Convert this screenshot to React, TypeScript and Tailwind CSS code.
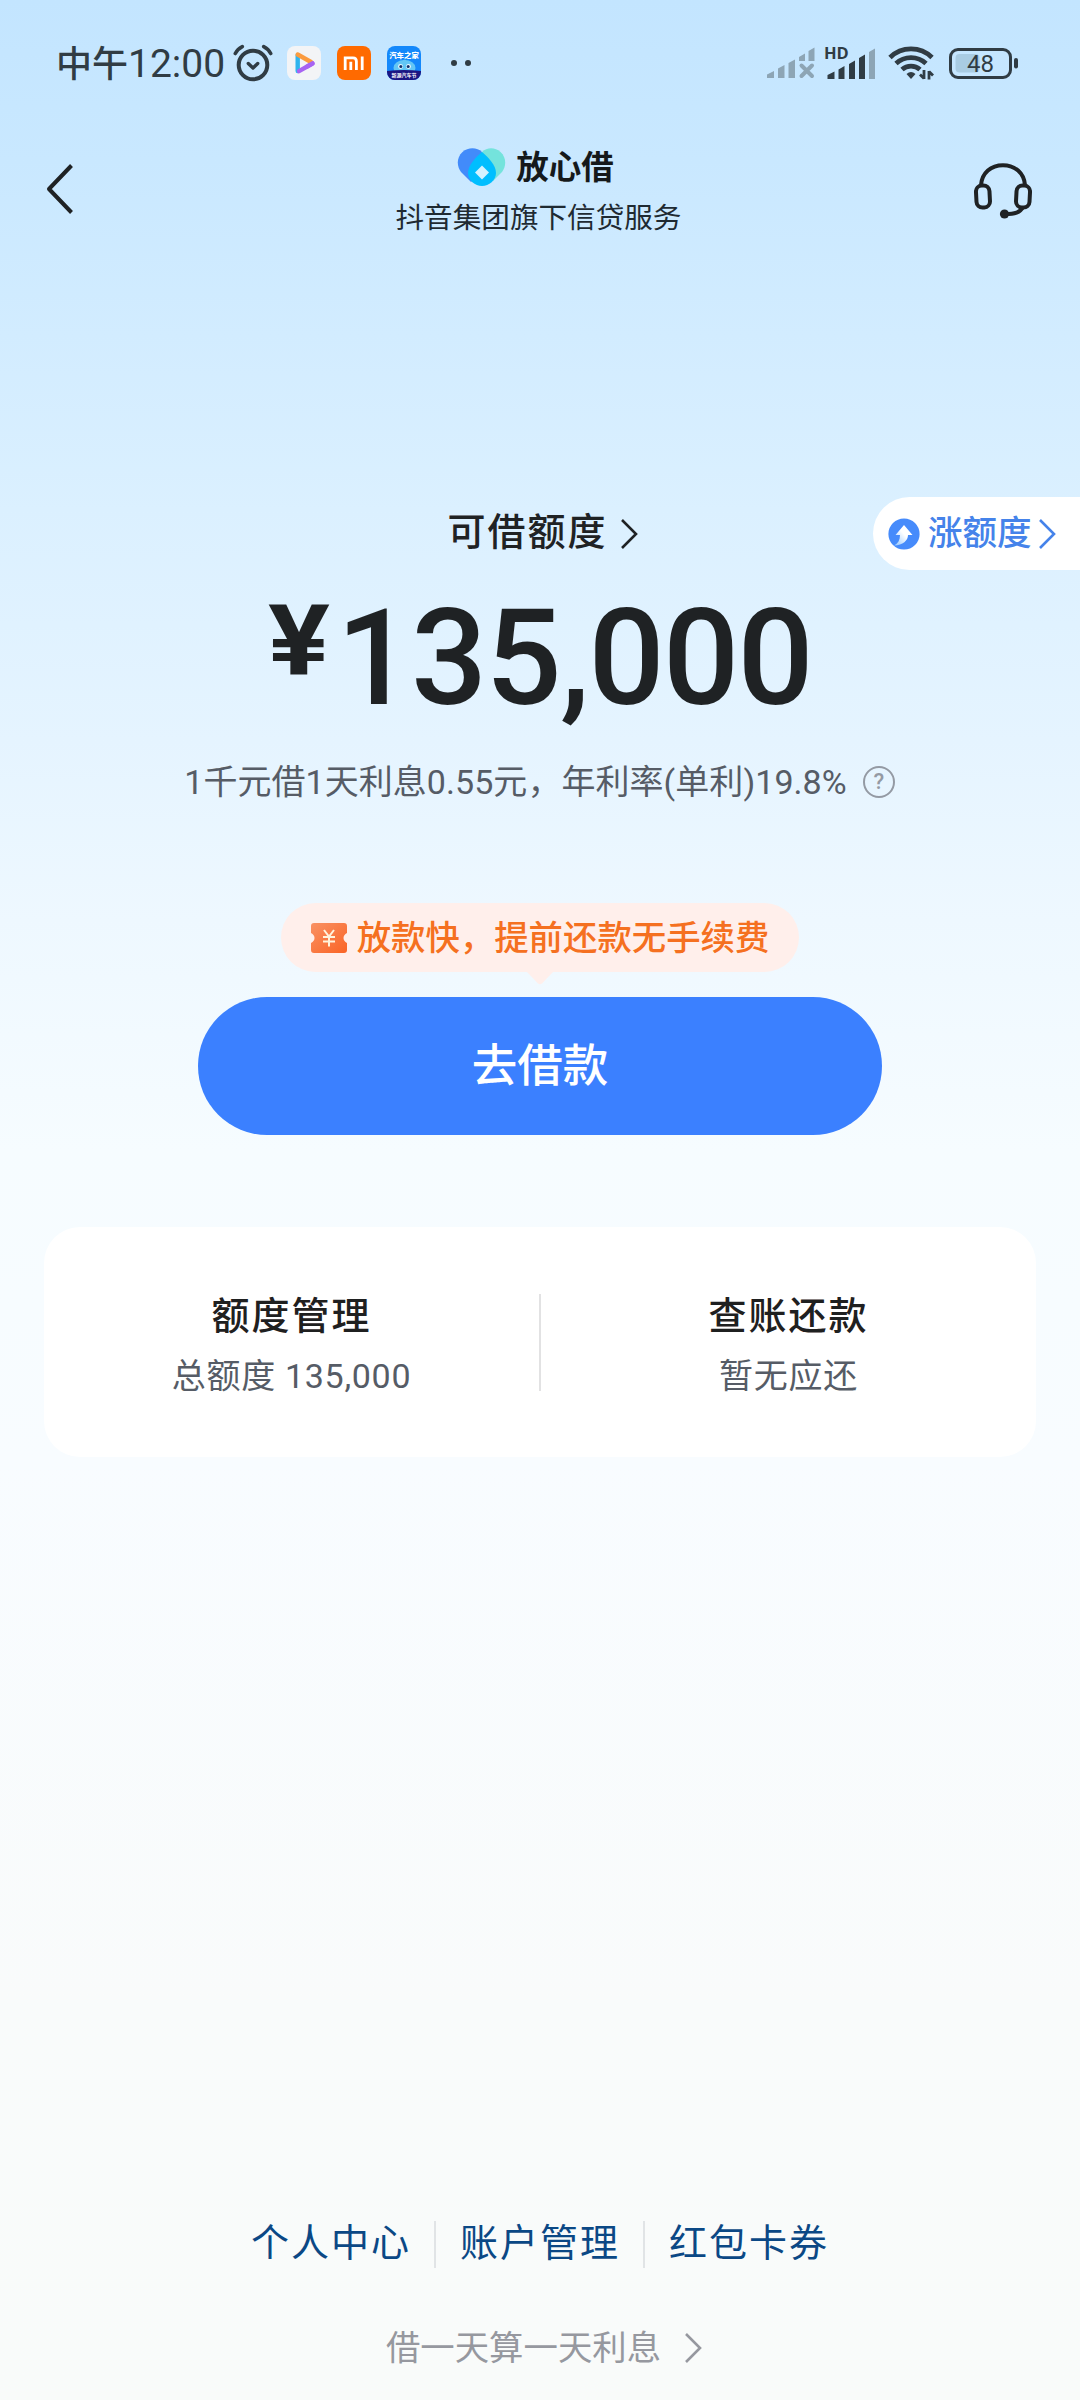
import React from 'react';

const links = ['个人中心', '账户管理', '红包卡券'];

function Chevron({ className, width = 2.6 }: { className?: string; width?: number }) {
  return (
    <svg className={className} width="18" height="32" viewBox="0 0 18 32" fill="none" stroke="currentColor" strokeWidth={width}>
      <path d="M2 2 L16 16 L2 30" />
    </svg>
  );
}

function AlarmIcon() {
  return (
    <svg width="40" height="38" viewBox="0 0 40 38" fill="none" stroke="#303c44" strokeWidth="4" strokeLinecap="round" strokeLinejoin="round">
      <circle cx="20" cy="21" r="14.3" />
      <path d="M15.3 19.5 L20 24 L24.7 19.5" strokeWidth="3.4" />
      <path d="M2.3 9.5 Q4.5 5 9.3 2.6 M37.7 9.5 Q35.5 5 30.7 2.6" strokeWidth="3.6" />
    </svg>
  );
}

function VideoAppIcon() {
  return (
    <svg width="34" height="34" viewBox="0 0 34 34">
      <rect width="34" height="34" rx="8" fill="#f3f4f6" />
      <g fill="none" strokeWidth="4.4" strokeLinecap="round">
        <path d="M10.7 9 V25" stroke="#2fb4ee" />
        <path d="M12 25.2 L25.5 17.5" stroke="#a763f2" />
        <path d="M10.7 8.5 L24 16" stroke="#fb9b3f" />
        <path d="M20 20.6 L25.5 17.3" stroke="#a763f2" />
      </g>
    </svg>
  );
}

function MiAppIcon() {
  return (
    <svg width="34" height="34" viewBox="0 0 34 34">
      <rect width="34" height="34" rx="8" fill="#ff6a00" />
      <g fill="none" stroke="#fff" strokeWidth="2.8">
        <path d="M8.2 24 V11.8 H16 Q19.4 11.8 19.4 15.4 V24" />
        <path d="M13.8 15.8 V24 M25.2 10.4 V24" />
      </g>
    </svg>
  );
}

function CarAppIcon() {
  return (
    <svg width="34" height="34" viewBox="0 0 34 34">
      <defs>
        <clipPath id="carClip">
          <rect width="34" height="34" rx="8" />
        </clipPath>
      </defs>
      <g clipPath="url(#carClip)">
        <rect width="34" height="34" fill="#1488fb" />
        <ellipse cx="17.5" cy="22" rx="11" ry="8" fill="#62c6f5" />
        <circle cx="17.5" cy="15.5" r="2" fill="#62c6f5" />
        <circle cx="13.5" cy="20.5" r="2.4" fill="#e8f8ff" />
        <circle cx="21.5" cy="20.5" r="2.4" fill="#e8f8ff" />
        <circle cx="13.8" cy="20.5" r="1.5" fill="#12306b" />
        <circle cx="21.2" cy="20.5" r="1.5" fill="#12306b" />
        <path d="M0 25 Q17 23 34 25 V34 H0 Z" fill="#1b1683" />
        <text x="17" y="12" textAnchor="middle" fontSize="7.4" fontWeight="900" fill="#fff">汽车之家</text>
        <text x="17" y="31" textAnchor="middle" fontSize="5" fontWeight="700" fill="#fff">新源汽车节</text>
      </g>
    </svg>
  );
}

function SignalOff() {
  return (
    <svg width="48" height="32" viewBox="0 0 48 32" fill="#8da5b5">
      <path d="M0 31 V27.5 L7 24 V31 Z M11 31 V21.5 L17.5 18 V31 Z M21.5 31 V16 L28 12.5 V31 Z M32 14 V10 L38 6.5 V14 Z M41.5 14 V4 L47.5 0.5 V14 Z" />
      <path d="M34.5 18.5 L45 29 M45 18.5 L34.5 29" stroke="#8da5b5" strokeWidth="4" strokeLinecap="round" />
    </svg>
  );
}

function SignalOn() {
  return (
    <svg className="overflow-visible" width="50" height="34" viewBox="0 0 50 34" fill="#303c44">
      <text x="-1" y="13" fontFamily="Open Sans" fontSize="16.5" fontWeight="700">HD</text>
      <path d="M2.5 33 V29 L9.5 25.5 V33 Z M13.5 33 V23.5 L19.5 20 V33 Z M24 33 V18 L30 14.5 V33 Z M34 33 V12 L40 8.5 V33 Z" />
      <path d="M44 33 V6 L50 2.5 V33 Z" fill="#8da5b5" />
    </svg>
  );
}

function WifiIcon() {
  return (
    <svg width="47" height="36" viewBox="0 0 47 36" fill="none" stroke="#303c44" strokeWidth="4.8">
      <path d="M2 12.5 A30 30 0 0 1 44 12.5" />
      <path d="M8 18.5 A22 22 0 0 1 38 18.5" />
      <path d="M14 24.5 A13.5 13.5 0 0 1 32 24.5" />
      <path d="M18.5 29 Q23 25 27.5 29 L23 34 Z" fill="#303c44" stroke="none" />
      <path d="M36 25 V34 M32 29.5 L36 33.5 M41 34.5 V26 M41 26.5 L45 30.5" strokeWidth="2.8" />
    </svg>
  );
}

function Battery() {
  return (
    <svg width="70" height="31" viewBox="0 0 70 31">
      <rect x="1.5" y="1.5" width="60" height="28" rx="7.5" fill="none" stroke="#303c44" strokeWidth="3" />
      <rect x="6.5" y="6" width="24" height="18.5" rx="4" fill="#a9cce3" />
      <rect x="65" y="10" width="4" height="10.5" rx="2" fill="#303c44" />
      <text x="31.5" y="24" textAnchor="middle" fontSize="24" fill="#303c44">48</text>
    </svg>
  );
}

function HeartLogo() {
  return (
    <svg width="49" height="38" viewBox="0 0 49 38">
      <path d="M25 4 C20 -1 11 -1 5.5 4 C-0.5 9.5 -0.5 18 4 24 L14 34 L34 20 Z" fill="#428bfa" />
      <path d="M25 4 C30 -1 38 -1 43.5 4 C49.5 9.5 49.5 18 45 24 L36 33 L20 20 Z" fill="#74e3dc" />
      <path d="M25 4 C31 9 39 17 39 25 C39 32 32 38 25 38 C18 38 11 32 11 25 C11 17 19 9 25 4 Z" fill="#00beff" />
      <path d="M25 17.5 L32 24.5 L25 31.5 L18 24.5 Z" fill="#d3f2ff" />
    </svg>
  );
}

function HeadsetIcon() {
  return (
    <svg width="58" height="56" viewBox="0 0 58 56" fill="none" stroke="#1f2224" strokeWidth="4" strokeLinejoin="round">
      <path d="M7 22 C8 10 17 2.2 29 2.2 C41 2.2 50 10 51 22" />
      <rect x="2.2" y="22.5" width="13.5" height="22" rx="6" transform="rotate(-3 9.5 33)" />
      <rect x="42.3" y="22.5" width="13.5" height="22" rx="6" transform="rotate(3 48.5 33)" />
      <path d="M49 44 C46 49.5 41 51 31 51" />
      <circle cx="30.5" cy="51" r="4.6" fill="#1f2224" stroke="none" />
    </svg>
  );
}

function RaiseIcon() {
  return (
    <svg width="32" height="32" viewBox="0 0 32 32">
      <defs>
        <linearGradient id="raise" x1="1" y1="0" x2="0" y2="1">
          <stop offset="0.45" stopColor="#fff" />
          <stop offset="1" stopColor="#8fc4ff" />
        </linearGradient>
      </defs>
      <circle cx="16" cy="16" r="15.6" fill="#468bfb" />
      <path d="M16 7 L24.5 17 H20 C20 22.5 15 27 6 27.5 C10 25.5 12 22 12 17 H7.5 Z" fill="url(#raise)" />
    </svg>
  );
}

function CouponIcon() {
  return (
    <svg width="36" height="30" viewBox="0 0 36 30">
      <defs>
        <linearGradient id="coupon" x1="0" y1="0" x2="1" y2="1">
          <stop offset="0" stopColor="#f99163" />
          <stop offset="1" stopColor="#fa6425" />
        </linearGradient>
      </defs>
      <path d="M3 0 H33 Q36 0 36 3 V10 Q32.5 12 32.5 15 Q32.5 18 36 20 V27 Q36 30 33 30 H3 Q0 30 0 27 V20 Q3.5 18 3.5 15 Q3.5 12 0 10 V3 Q0 0 3 0 Z" fill="url(#coupon)" />
      <path d="M13 7 L18 13.5 L23 7 M18 13 V23.5 M12 14 H24 M12 18.5 H24" fill="none" stroke="#fff3dc" strokeWidth="2" />
    </svg>
  );
}

function StatusBar() {
  return (
    <div className="flex h-[126px] items-center pl-[56px] pr-[61px] text-[#303c44]">
      <span className="w-[177px] whitespace-nowrap pt-[2px] text-[36px] leading-[44px] font-medium">
        中午<span className="text-[39px] font-normal">12:00</span>
      </span>
      <AlarmIcon />
      <div className="ml-[14px] flex gap-4">
        <VideoAppIcon />
        <MiAppIcon />
        <CarAppIcon />
      </div>
      <div className="ml-[30px] flex gap-2">
        <i className="size-[6px] rounded-full bg-[#303c44]" />
        <i className="size-[6px] rounded-full bg-[#303c44]" />
      </div>
      <div className="ml-auto flex items-center">
        <SignalOff />
        <div className="ml-[10px] mr-[13px]">
          <SignalOn />
        </div>
        <WifiIcon />
        <div className="ml-[14px]">
          <Battery />
        </div>
      </div>
    </div>
  );
}

function NavBar() {
  return (
    <div className="flex h-[126px] items-center justify-between pl-[45px] pr-[48px]">
      <svg width="60" height="52" viewBox="0 0 60 52" fill="none" stroke="#1f2224" strokeWidth="4" strokeLinejoin="round">
        <path d="M26.5 2.5 L4 26 L26.5 49.5" />
      </svg>
      <div className="flex flex-col items-center pr-[2px]">
        <div className="flex h-[51px] items-start pr-[6px] pt-[8px]">
          <HeartLogo />
          <span className="ml-[10px] whitespace-nowrap pt-[1px] text-[32.5px] leading-[38px] font-bold text-[#15191b]">放心借</span>
        </div>
        <span className="mt-[7px] whitespace-nowrap text-[28.6px] leading-[40px] text-[#1f2a32]">抖音集团旗下信贷服务</span>
      </div>
      <div className="pt-[3px]">
        <HeadsetIcon />
      </div>
    </div>
  );
}

function Quota() {
  return (
    <div className="mt-[245px] flex flex-col items-center">
      <div className="grid h-[73px] w-full grid-cols-[1fr_auto_1fr] items-center">
        <span />
        <div className="flex items-center pl-[5px] text-[#1f2224]">
          <span className="pb-[3px] text-[38px] leading-[48px] font-medium tracking-[2px]">可借额度</span>
          <Chevron className="ml-[12px]" />
        </div>
        <div className="flex h-[73px] w-[207px] items-center justify-self-end rounded-l-full bg-white pl-[15px] text-[#4583ea]">
          <RaiseIcon />
          <span className="ml-[8px] whitespace-nowrap pb-[2px] text-[34.5px] leading-[44px] font-medium">涨额度</span>
          <Chevron className="ml-[6px]" />
        </div>
      </div>
      <div className="mt-[14px] flex h-[140px] items-start text-[#1f2224]">
        <span className="origin-left scale-x-[1.18] text-[98px] leading-[116px] font-bold">¥</span>
        <span className="ml-[16px] text-[134px] leading-[150px] font-medium tracking-[-1.6px]">135,000</span>
      </div>
      <div className="mt-[32px] flex h-[52px] items-center pr-[1px] text-[#565c66]">
        <span className="whitespace-nowrap text-[34px] leading-[52px] tracking-[0.05px]">1千元借1天利息0.55元，年利率(单利)19.8%</span>
        <span className="ml-[16px] flex size-[32px] items-center justify-center rounded-full border-[2.5px] border-[#949aa4] text-[22px] leading-none font-medium text-[#949aa4]">?</span>
      </div>
    </div>
  );
}

function Borrow() {
  return (
    <div className="mt-[95px] flex flex-col items-center">
      <div className="flex h-[69px] w-[518px] items-center justify-center rounded-full bg-[#ffefeb] text-[#f57020]">
        <CouponIcon />
        <span className="ml-[10px] whitespace-nowrap text-[34.4px] leading-[44px] font-medium">放款快，提前还款无手续费</span>
      </div>
      <svg width="26" height="13" viewBox="0 0 26 13" fill="#ffefeb">
        <path d="M0 0 H26 L15 11.5 Q13 13 11 11.5 Z" />
      </svg>
      <button className="mt-[12px] h-[138px] w-[684px] rounded-full bg-[#3b80ff] pt-[3px] text-[45.5px] font-medium text-white">去借款</button>
    </div>
  );
}

function AccountCell({ title, text }: { title: string; text: string }) {
  return (
    <div className="flex h-[97px] flex-1 flex-col items-center">
      <span className="-mt-[4px] text-[38px] leading-[52px] font-medium tracking-[2px] text-[#1f2020]">{title}</span>
      <span className="mt-[10px] whitespace-nowrap text-[34px] leading-[48px] tracking-[0.7px] text-[#565c66]">{text}</span>
    </div>
  );
}

export default function App() {
  return (
    <div className="flex h-[2400px] w-[1080px] flex-col overflow-hidden bg-[linear-gradient(180deg,#c3e5ff_0px,#c9e8ff_160px,#dbf0ff_510px,#e5f4ff_740px,#eef8ff_920px,#f6fcff_1150px,#f8fcff_1460px,#f9fbfb_2000px,#f9fbfa_2400px)] font-[Roboto,'Noto_Sans_CJK_SC',sans-serif]">
      <StatusBar />
      <NavBar />
      <Quota />
      <Borrow />

      <div className="mx-[44px] mt-[92px] flex h-[230px] items-center rounded-[36px] bg-white">
        <AccountCell title="额度管理" text="总额度 135,000" />
        <i className="h-[97px] w-[2px] bg-[#e2e2e3]" />
        <AccountCell title="查账还款" text="暂无应还" />
      </div>

      <div className="mt-auto flex h-[48px] items-center justify-center text-[#0b4885]">
        {links.map((link, i) => (
          <React.Fragment key={link}>
            {i > 0 && <i className="ml-[23px] mr-[24px] h-[47px] w-[2px] bg-[#e1e4e6]" />}
            <span className="pb-[3px] text-[38px] leading-[48px] tracking-[2px]">{link}</span>
          </React.Fragment>
        ))}
      </div>
      <div className="mb-[28px] mt-[56px] flex h-[48px] items-center justify-center pl-[8px] text-[#96989f]">
        <span className="text-[34.4px] leading-[48px]">借一天算一天利息</span>
        <Chevron className="ml-[23px]" />
      </div>
    </div>
  );
}
